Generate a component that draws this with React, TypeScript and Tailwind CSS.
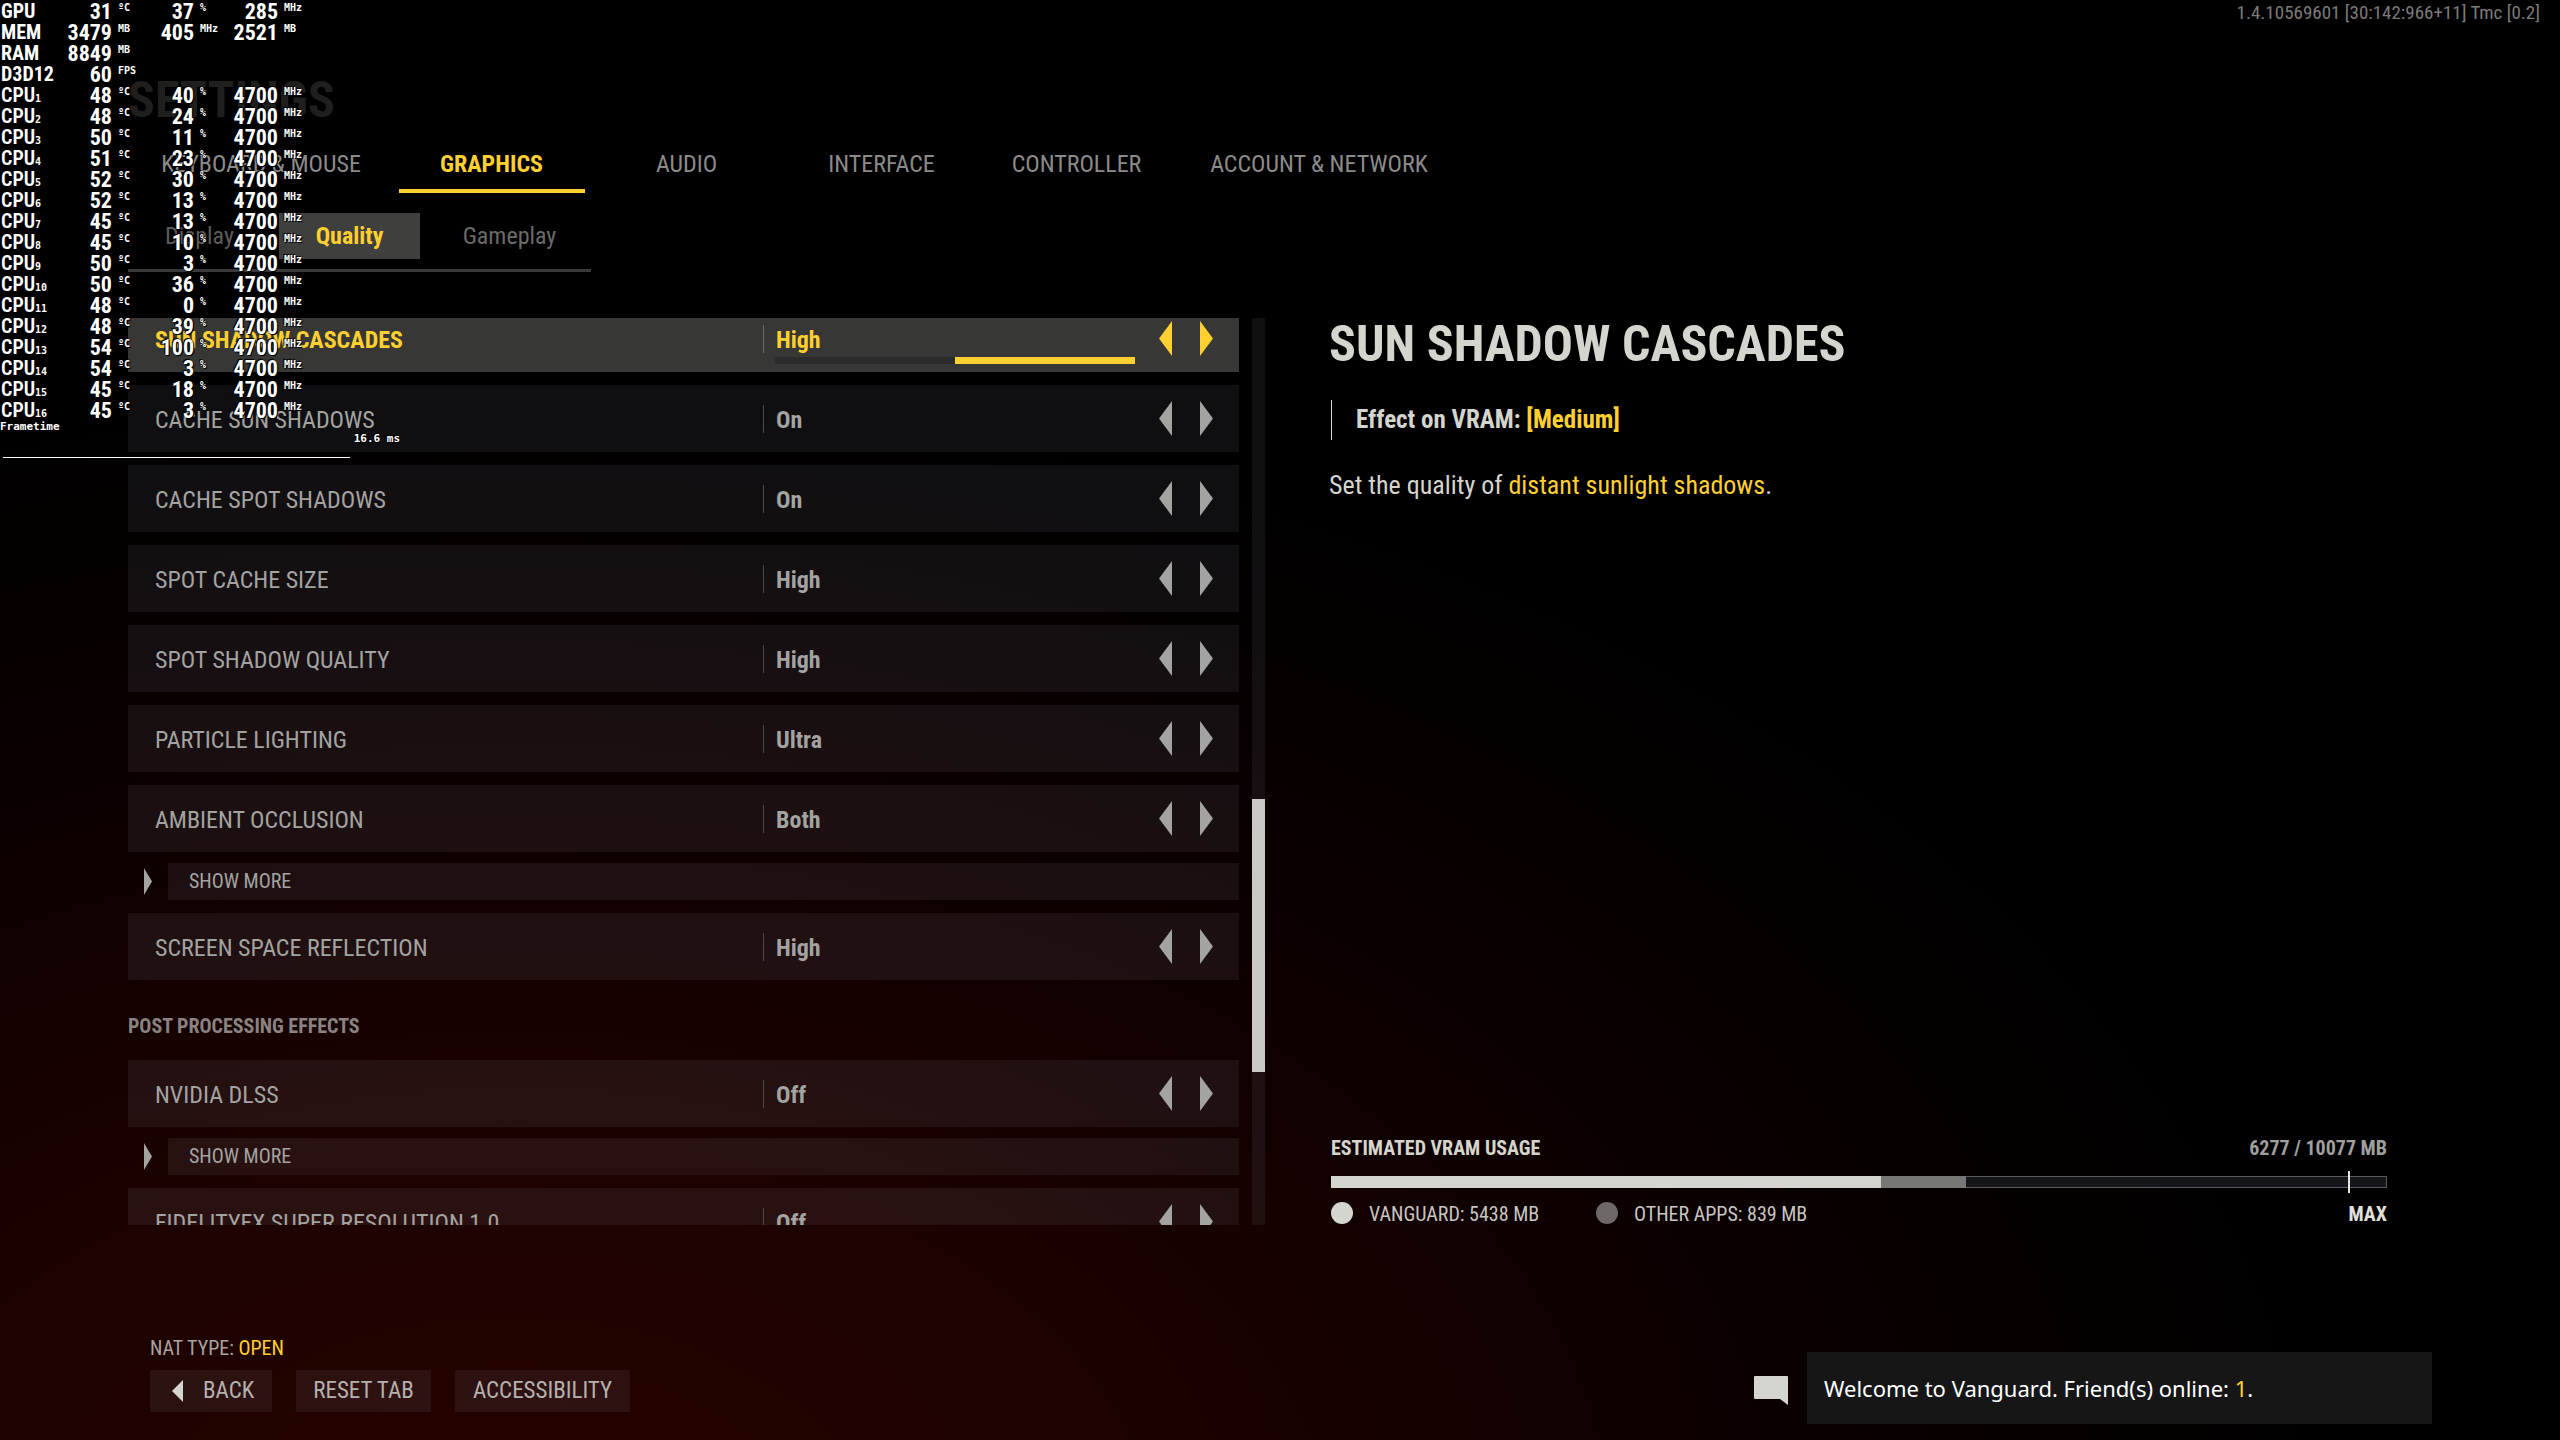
import React from "react";

type Reading = { value: string; unit: string };
type SensorRow = { label: string; index?: string; readings: Reading[] };

const core = (index: number, temp: number, load: number): SensorRow => ({
  label: "CPU",
  index: String(index),
  readings: [
    { value: String(temp), unit: "ºC" },
    { value: String(load), unit: "%" },
    { value: "4700", unit: "MHz" },
  ],
});

const sensors: SensorRow[] = [
  { label: "GPU", readings: [{ value: "31", unit: "ºC" }, { value: "37", unit: "%" }, { value: "285", unit: "MHz" }] },
  { label: "MEM", readings: [{ value: "3479", unit: "MB" }, { value: "405", unit: "MHz" }, { value: "2521", unit: "MB" }] },
  { label: "RAM", readings: [{ value: "8849", unit: "MB" }] },
  { label: "D3D12", readings: [{ value: "60", unit: "FPS" }] },
  core(1, 48, 40),
  core(2, 48, 24),
  core(3, 50, 11),
  core(4, 51, 23),
  core(5, 52, 30),
  core(6, 52, 13),
  core(7, 45, 13),
  core(8, 45, 10),
  core(9, 50, 3),
  core(10, 50, 36),
  core(11, 48, 0),
  core(12, 48, 39),
  core(13, 54, 100),
  core(14, 54, 3),
  core(15, 45, 18),
  core(16, 45, 3),
];

function Arrow({ dir, className }: { dir: "left" | "right"; className: string }) {
  return (
    <svg viewBox="0 0 13 35" preserveAspectRatio="none" className={className} fill="currentColor" aria-hidden="true">
      <path d={dir === "left" ? "M13 0V35L0 17.5Z" : "M0 0V35L13 17.5Z"} />
    </svg>
  );
}

function SensorOverlay() {
  return (
    <aside className="pointer-events-none absolute top-0 left-0 z-10 pt-px text-white [text-shadow:0_0_2px_#000,1px_1px_0_#000,-1px_-1px_0_#000]">
      <table className="table-fixed border-collapse">
        <tbody>
          {sensors.map((row) => (
            <tr key={row.label + (row.index ?? "")} className="h-[21px] text-[22px] leading-[21px] font-bold">
              <th className={`w-14 p-0 pl-px text-left text-xl leading-[21px] whitespace-nowrap ${row.index ? "font-semibold" : "font-bold"}`}>
                <span className="flex h-[21px] items-end">
                  {row.label}
                  {row.index && (
                    <span className="text-[10px] leading-[14px] [font-family:'DejaVu_Sans_Mono',monospace]">{row.index}</span>
                  )}
                </span>
              </th>
              {[0, 1, 2].map((i) => (
                <React.Fragment key={i}>
                  <td className={i === 1 ? "w-[54px] p-0 text-right" : "w-14 p-0 text-right"}>{row.readings[i]?.value}</td>
                  <td className="w-7 p-0 pl-1.5 align-top text-[10px] leading-[14px] [font-family:'DejaVu_Sans_Mono',monospace]">
                    {row.readings[i]?.unit}
                  </td>
                </React.Fragment>
              ))}
            </tr>
          ))}
        </tbody>
      </table>
      <div className="w-[400px] text-[11px] leading-3 font-bold [font-family:'DejaVu_Sans_Mono',monospace]">
        <p>Frametime</p>
        <p className="text-right">16.6 ms</p>
      </div>
      <div className="mt-3 ml-[3px] h-px w-[347px] bg-white" />
    </aside>
  );
}

const tabs = ["KEYBOARD & MOUSE", "GRAPHICS", "AUDIO", "INTERFACE", "CONTROLLER", "ACCOUNT & NETWORK"];
const tabWidths = ["w-[266px]", "w-[195px]", "w-[195px]", "w-[195px]", "w-[195px]", "w-[290px]"];

function Header() {
  return (
    <header>
      <h1 className="pt-[70px] text-[50px] leading-[60px] font-bold text-[#1f1f1e]">SETTINGS</h1>
      <nav className="mt-1.5 flex" aria-label="Settings">
        {tabs.map((tab, i) => {
          const active = tab === "GRAPHICS";
          return (
            <button
              key={tab}
              type="button"
              className={`${tabWidths[i]} flex h-[57px] flex-col items-center justify-between text-2xl whitespace-nowrap ${active ? "font-bold text-[#ffd02f]" : "text-[#8b8b89]"}`}
            >
              <span className="leading-[57px]">{tab}</span>
              {active && <span className="-mt-4 h-1 w-[186px] shrink-0 bg-[#ffd02f]" />}
            </button>
          );
        })}
      </nav>
      <div className="mt-5 flex w-[463px] border-b-3 border-[#3a3a3a] pb-2.5 text-2xl leading-[46px]">
        <button type="button" className="w-[151px] pr-2 text-[#5c5c5b]">Display</button>
        <button type="button" className="w-[141px] bg-[#3f3f3e] font-bold text-[#ffd02f]">Quality</button>
        <button type="button" className="flex-1 pl-2 text-[#6b6b6a]">Gameplay</button>
      </div>
    </header>
  );
}

function OptionRow({ label, value, selected }: { label: string; value: string; selected?: boolean }) {
  return (
    <div
      className={`grid h-[67px] shrink-0 grid-cols-[635fr_476fr] items-center text-2xl ${selected ? "bg-[#373735] font-bold text-[#ffd02f]" : "bg-[#e0e6ff]/6.5 text-[#a3a3a1]"}`}
    >
      <span className="pt-0.5 pl-[27px]">{label}</span>
      <div className="relative flex h-full items-center pr-[26px]">
        <span className={`mr-3 h-7 w-px ${selected ? "bg-[#6b6b69]" : "bg-[#4a4a4b]"}`} />
        <span className="flex-1 pt-0.5 font-bold">{value}</span>
        <button type="button" aria-label={`${label}: previous`} className="mr-7">
          <Arrow dir="left" className="h-[35px] w-[13px]" />
        </button>
        <button type="button" aria-label={`${label}: next`}>
          <Arrow dir="right" className="h-[35px] w-[13px]" />
        </button>
        {selected && (
          <div className="absolute right-[104px] bottom-2 left-3 flex h-[7px]">
            <span className="flex-1 bg-[#2c2c2d]" />
            <span className="flex-1 bg-[#ffd02f]" />
          </div>
        )}
      </div>
    </div>
  );
}

function ShowMore() {
  return (
    <button type="button" className="-mt-0.5 flex h-[37px] shrink-0 items-center text-left text-xl text-[#a3a3a1]">
      <Arrow dir="right" className="mr-4 ml-4 h-[27px] w-2" />
      <span className="h-full flex-1 bg-[#e0e6ff]/6.5 pl-[21px] leading-[36px]">SHOW MORE</span>
    </button>
  );
}

function OptionList() {
  return (
    <div className="flex min-h-0 gap-[13px]">
      <div className="flex flex-1 flex-col overflow-hidden">
        <div className="-mt-[13px] flex flex-col gap-[13px]">
          <OptionRow label="SUN SHADOW CASCADES" value="High" selected />
          <OptionRow label="CACHE SUN SHADOWS" value="On" />
          <OptionRow label="CACHE SPOT SHADOWS" value="On" />
          <OptionRow label="SPOT CACHE SIZE" value="High" />
          <OptionRow label="SPOT SHADOW QUALITY" value="High" />
          <OptionRow label="PARTICLE LIGHTING" value="Ultra" />
          <OptionRow label="AMBIENT OCCLUSION" value="Both" />
          <ShowMore />
          <OptionRow label="SCREEN SPACE REFLECTION" value="High" />
          <h2 className="h-[54px] shrink-0 pt-4 text-xl leading-[34px] font-bold text-[#898382]">POST PROCESSING EFFECTS</h2>
          <OptionRow label="NVIDIA DLSS" value="Off" />
          <ShowMore />
          <OptionRow label="FIDELITYFX SUPER RESOLUTION 1.0" value="Off" />
        </div>
      </div>
      <div className="flex w-[13px] flex-col bg-[#e0e6ff]/6.5">
        <div className="flex-[481]" />
        <div className="flex-[273] bg-[#c9cac3]" />
        <div className="flex-[153]" />
      </div>
    </div>
  );
}

function VramUsage() {
  return (
    <section className="text-xl leading-6 text-[#c6c6c2]">
      <div className="flex justify-between font-bold">
        <h3 className="text-[#d4d5ce]">ESTIMATED VRAM USAGE</h3>
        <span className="text-[#9f9f9d]">6277 / 10077 MB</span>
      </div>
      <div className="relative mt-4 flex h-3 border border-[#5a5a5b] bg-[#15161a]">
        <span className="-my-px -ml-px flex-[550] bg-[#d4d5ce]" />
        <span className="-my-px flex-[85] bg-[#777775]" />
        <span className="flex-[420]" />
        <span className="absolute -top-1.5 right-9 h-[22px] w-0.5 bg-[#e6e6e2]" />
      </div>
      <div className="-mb-px mt-3.5 flex items-start">
        <span className="mr-4 size-[22px] rounded-full bg-[#d4d5ce]" />
        <span className="w-[227px]">VANGUARD: 5438 MB</span>
        <span className="mr-4 size-[22px] rounded-full bg-[#6e6867]" />
        <span className="flex-1">OTHER APPS: 839 MB</span>
        <span className="font-bold text-[#e0e0db]">MAX</span>
      </div>
    </section>
  );
}

function Details() {
  return (
    <section className="flex flex-col justify-between text-[#d4d5ce]">
      <div>
        <h2 className="-ml-0.5 text-[50px] leading-[52px] font-bold">SUN SHADOW CASCADES</h2>
        <p className="mt-[30px] border-l border-[#d4d5ce] pl-6 text-[25px] leading-10 font-bold">
          Effect on VRAM: <span className="text-[#ffd02f]">[Medium]</span>
        </p>
        <p className="mt-6 -ml-0.5 text-[26px] leading-[42px]">
          Set the quality of <span className="text-[#ffd02f]">distant sunlight shadows</span>.
        </p>
      </div>
      <VramUsage />
    </section>
  );
}

function Footer() {
  const button = "flex h-[42px] items-center bg-[#e0e6ff]/6.5 text-[23px] text-[#b5b1ae]";
  return (
    <footer className="flex h-[215px] shrink-0 items-end justify-between pr-32">
      <div className="pb-7 pl-[22px]">
        <p className="text-xl leading-6 text-[#a8a4a2]">
          NAT TYPE: <span className="text-[#ffd02f]">OPEN</span>
        </p>
        <div className="mt-2.5 flex gap-6">
          <button type="button" className={`${button} w-[122px] gap-5 pl-[22px]`}>
            <Arrow dir="left" className="h-[22px] w-[11px] text-[#d4d5ce]" />
            BACK
          </button>
          <button type="button" className={`${button} w-[135px] justify-center`}>RESET TAB</button>
          <button type="button" className={`${button} w-[175px] justify-center`}>ACCESSIBILITY</button>
        </div>
      </div>
      <div className="mb-4 flex items-center gap-[19px]">
        <svg viewBox="0 0 34 29" className="mt-1 h-[29px] w-[34px]" fill="#d4d5ce" aria-hidden="true">
          <path d="M1 0H33Q34 0 34 1V29L26 23H1Q0 23 0 22V1Q0 0 1 0Z" />
        </svg>
        <p className="w-[625px] bg-[#161617] pl-[17px] text-[22px] leading-[72px] text-white [font-family:'Noto_Sans',sans-serif]">
          Welcome to Vanguard. Friend(s) online: <span className="text-[#ffd02f]">1</span>.
        </p>
      </div>
    </footer>
  );
}

export default function App() {
  return (
    <div className="relative flex h-screen flex-col overflow-hidden bg-black bg-[radial-gradient(ellipse_72%_82%_at_20%_108%,#260300_0%,#1c0200_35%,#0c0000_68%,#000_100%)] pl-32 [font-family:'Roboto_Condensed','Liberation_Sans_Narrow',Roboto,sans-serif]">
      <SensorOverlay />
      <p className="absolute top-0 right-5 text-[19px] leading-[26px] text-[#7b7b79]">1.4.10569601 [30:142:966+11] Tmc [0.2]</p>
      <Header />
      <main className="mt-[46px] grid min-h-0 flex-1 grid-cols-[1137fr_1056fr] grid-rows-[minmax(0,1fr)] gap-[66px] pr-[173px]">
        <OptionList />
        <Details />
      </main>
      <Footer />
    </div>
  );
}
